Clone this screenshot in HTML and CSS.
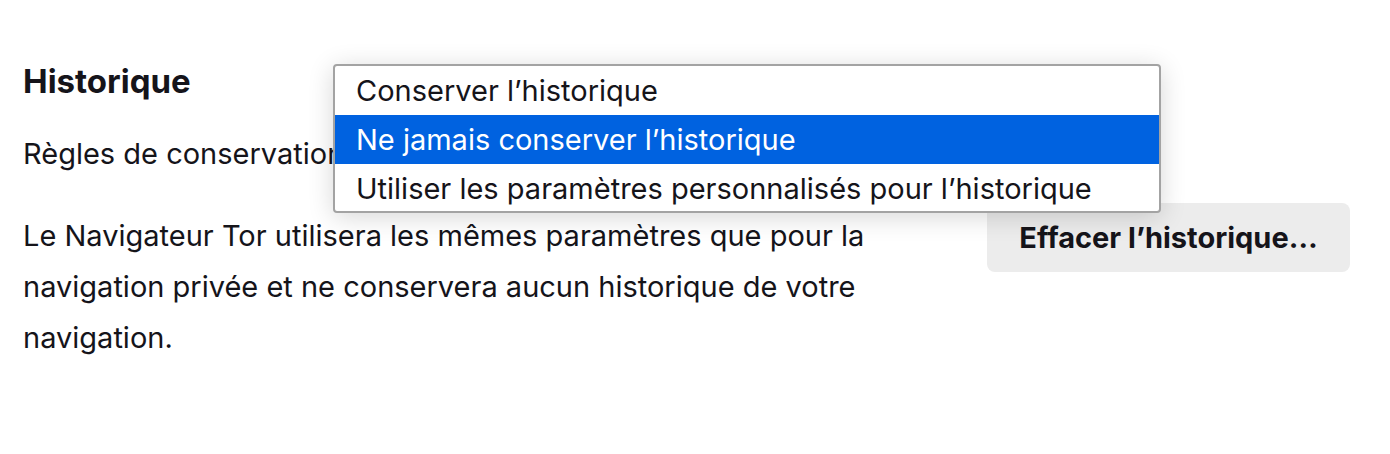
FILE: index.html
```html
<!DOCTYPE html>
<html lang="fr">
<head>
    <meta charset="UTF-8">
    <meta name="viewport" content="width=device-width, initial-scale=1.0">
    <title>Historique</title>
    <link rel="stylesheet" href="styles.css">
</head>
<body>
    <div class="section">
        <h2 class="section-title">Historique</h2>

        <div class="history-mode">
            <span class="history-label">Règles de conservation :</span>
        </div>

        <div class="history-row">
            <p class="history-desc">Le Navigateur Tor utilisera les mêmes paramètres que pour la navigation privée et ne conservera aucun historique de votre navigation.</p>
            <button class="clear-btn">Effacer l’historique…</button>
        </div>

        <!-- Open list of the history select -->
        <ul class="select-popup">
            <li class="option">Conserver l’historique</li>
            <li class="option selected">Ne jamais conserver l’historique</li>
            <li class="option">Utiliser les paramètres personnalisés pour l’historique</li>
        </ul>
    </div>
</body>
</html>
```

FILE: styles.css
```css
body {
    margin: 0;
    padding: 0;
    background-color: #fff;
    color: #15141a;
    font-family: Inter, "Noto Sans", sans-serif;
    font-size: 29px;
}

.section {
    position: relative;
    padding: 61px 40px 0 23px;
}

.section-title {
    margin: 0 0 28px 0;
    font-size: 33px;
    line-height: 40px;
    font-weight: 700;
}

.history-mode {
    line-height: 50px;
    margin-bottom: 24px;
}

.history-row {
    display: flex;
    justify-content: space-between;
    align-items: flex-start;
}

.history-desc {
    margin: 7px 0 0 0;
    width: 870px;
    line-height: 51px;
}

.clear-btn {
    width: 363px;
    height: 69px;
    border: none;
    border-radius: 8px;
    background-color: #ececec;
    color: #15141a;
    font-family: inherit;
    font-size: 29px;
    font-weight: 700;
}

.select-popup {
    position: absolute;
    left: 333px;
    top: 64px;
    width: 824px;
    margin: 0;
    padding: 0;
    list-style: none;
    background-color: #fff;
    border: 2px solid #a3a3a3;
    border-radius: 4px;
    box-shadow: 0 4px 26px rgba(0, 0, 0, 0.16);
}

.option {
    height: 49px;
    line-height: 49px;
    padding-left: 21px;
}

.option:last-child {
    height: 47px;
}

.option.selected {
    background-color: #0062e0;
    color: #fff;
}
```
